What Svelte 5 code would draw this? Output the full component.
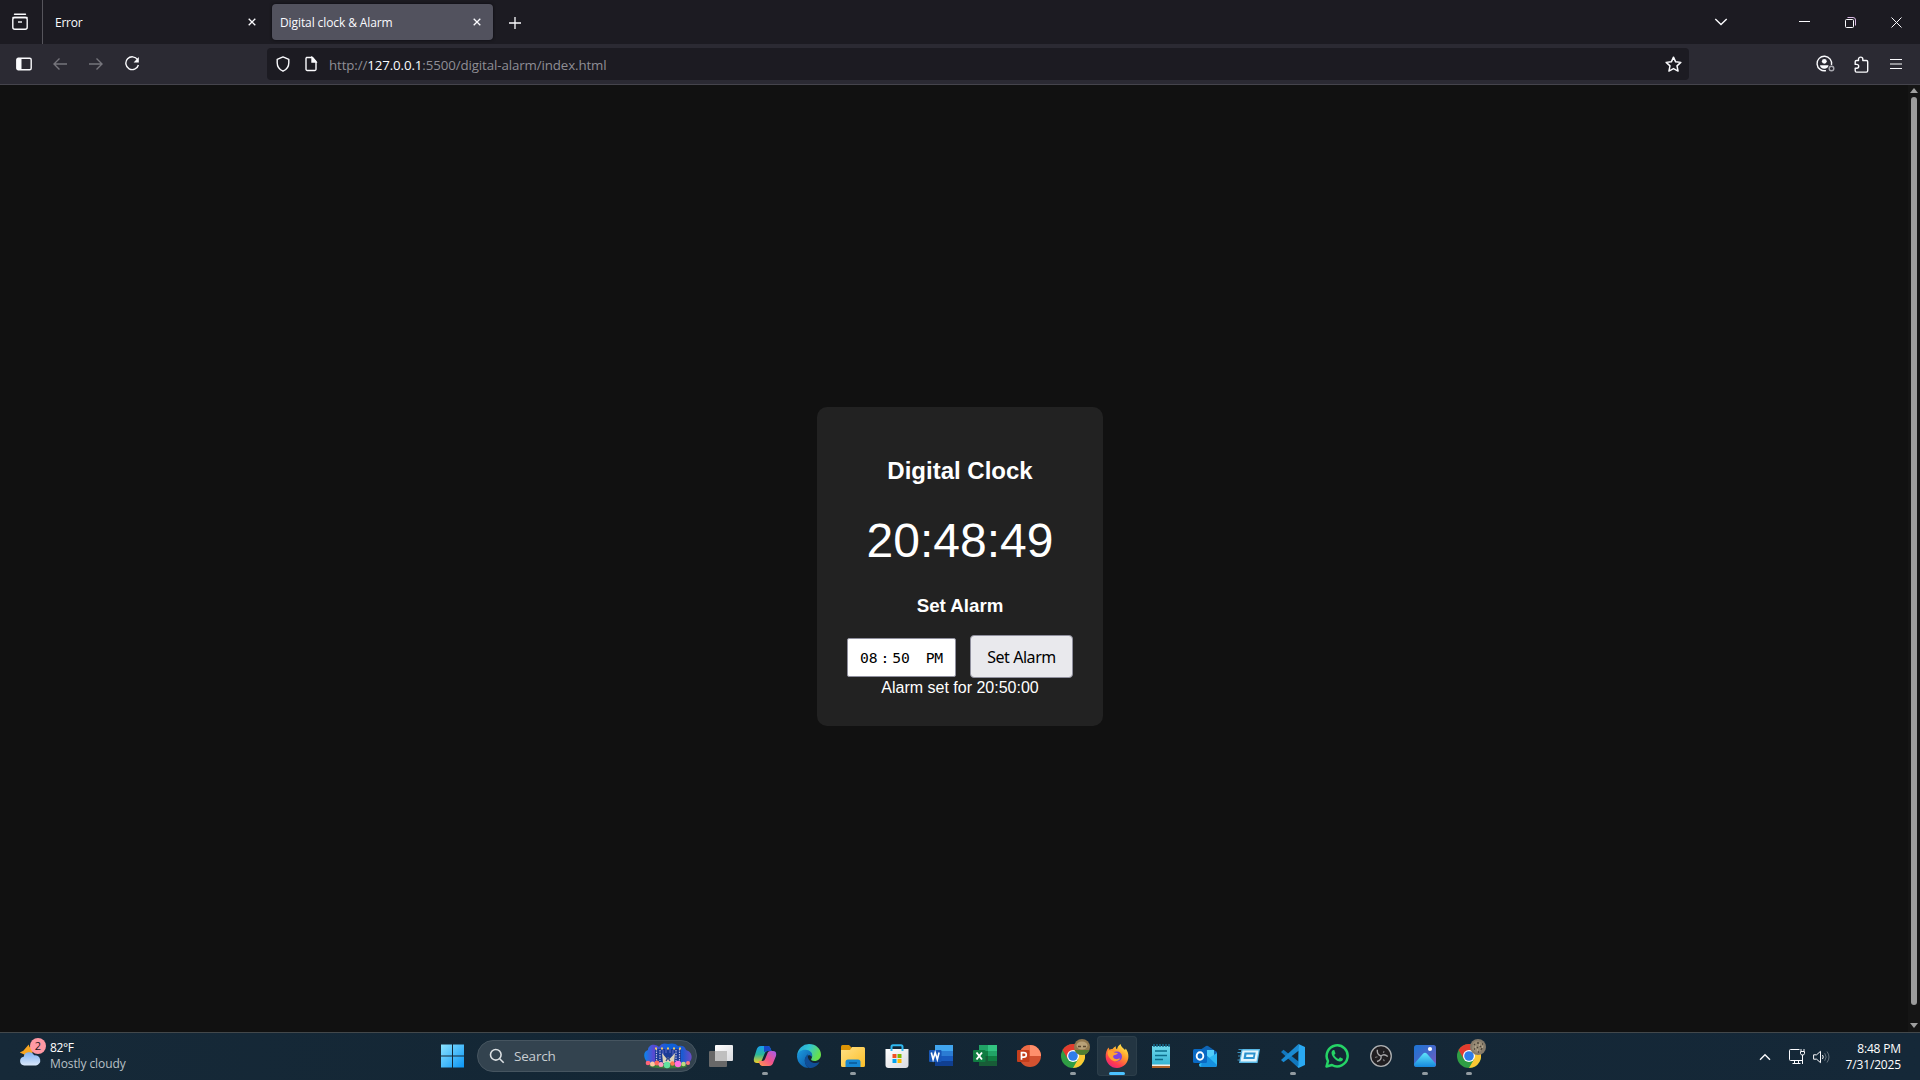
<script>
  const clock = '20:48:49';
  const apps = [
    { id: 'taskview' },
    { id: 'copilot', running: true },
    { id: 'edge' },
    { id: 'explorer', running: true },
    { id: 'store' },
    { id: 'word' },
    { id: 'excel' },
    { id: 'powerpoint' },
    { id: 'chrome', running: true, avatar: 'a' },
    { id: 'firefox', active: true },
    { id: 'notepad' },
    { id: 'outlook' },
    { id: 'run' },
    { id: 'vscode', running: true },
    { id: 'whatsapp' },
    { id: 'obs' },
    { id: 'photos', running: true },
    { id: 'chrome', running: true, avatar: 'b' }
  ];
</script>

<svg width="0" height="0" class="defs" aria-hidden="true">
  <defs>
    <linearGradient id="win" x1="0" y1="0" x2="1" y2="1"><stop offset="0" stop-color="#8be3ff" /><stop offset="1" stop-color="#0a95f5" /></linearGradient>
    <linearGradient id="copA" x1="0" y1="0" x2="0" y2="1"><stop offset="0" stop-color="#189df0" /><stop offset=".5" stop-color="#2bb89a" /><stop offset="1" stop-color="#f5cf25" /></linearGradient>
    <linearGradient id="copB" x1="1" y1="0" x2="0" y2="1"><stop offset="0" stop-color="#a45df0" /><stop offset=".5" stop-color="#f0528c" /><stop offset="1" stop-color="#ff9a4a" /></linearGradient>
    <linearGradient id="edgeA" x1="0" y1="0" x2="1" y2=".4"><stop offset="0" stop-color="#229fdc" /><stop offset=".5" stop-color="#32c4d2" /><stop offset="1" stop-color="#67e04c" /></linearGradient>
    <linearGradient id="edgeB" x1="0" y1="0" x2="1" y2="1"><stop offset="0" stop-color="#1b9de2" /><stop offset="1" stop-color="#0c4e9c" /></linearGradient>
    <linearGradient id="fold" x1="0" y1="0" x2="1" y2="1"><stop offset="0" stop-color="#ffe086" /><stop offset="1" stop-color="#fcbf28" /></linearGradient>
    <linearGradient id="fox" x1=".8" y1="0" x2=".2" y2="1"><stop offset="0" stop-color="#fff14f" /><stop offset=".4" stop-color="#ff9a2a" /><stop offset=".75" stop-color="#ff3d4f" /><stop offset="1" stop-color="#e51f81" /></linearGradient>
    <linearGradient id="pad" x1="0" y1="0" x2="0" y2="1"><stop offset="0" stop-color="#6fd8ec" /><stop offset="1" stop-color="#36b4d4" /></linearGradient>
    <linearGradient id="photo" x1="0" y1="0" x2="1" y2="1"><stop offset="0" stop-color="#1b74d4" /><stop offset=".6" stop-color="#4d66c8" /><stop offset="1" stop-color="#8058bf" /></linearGradient>
    <linearGradient id="hill" x1="0" y1="0" x2="0" y2="1"><stop offset="0" stop-color="#60e5fb" /><stop offset="1" stop-color="#1687dc" /></linearGradient>
    <linearGradient id="cloud" x1="0" y1="0" x2="0" y2="1"><stop offset="0" stop-color="#7fb1f2" /><stop offset="1" stop-color="#dbe8fa" /></linearGradient>
    <linearGradient id="white" x1="0" y1="0" x2="1" y2="1"><stop offset="0" stop-color="#fff" /><stop offset="1" stop-color="#d9dade" /></linearGradient>
    <linearGradient id="balloons" x1="0" y1="0" x2="1" y2="0"><stop offset="0" stop-color="#0a84ec" /><stop offset=".2" stop-color="#5a48d0" /><stop offset=".5" stop-color="#0c62d8" /><stop offset=".8" stop-color="#1a5ad2" /><stop offset="1" stop-color="#6a4cc8" /></linearGradient>
  </defs>
</svg>

<div class="screen">
  <header class="tabs">
    <div class="archive">
      <svg width="18" height="18" viewBox="0 0 18 18" class="line"><path d="M3.5 1.2h11M2 4.5h14" stroke-linecap="round" /><rect x="1.8" y="4.5" width="14.4" height="11.7" rx="2" /><path d="M7 9h4" /></svg>
    </div>
    <div class="tab">
      <span class="label err">Error</span>
      <svg width="8" height="8" viewBox="0 0 8 8" class="line close"><path d="M.7.7l6.6 6.6M7.3.7L.7 7.3" /></svg>
    </div>
    <div class="tab current">
      <span class="label title">Digital clock &amp; Alarm</span>
      <svg width="8" height="8" viewBox="0 0 8 8" class="line close"><path d="M.7.7l6.6 6.6M7.3.7L.7 7.3" /></svg>
    </div>
    <svg width="12" height="12" viewBox="0 0 12 12" class="line plus"><path d="M6 0v12M0 6h12" /></svg>
    <div class="window">
      <svg width="14" height="8" viewBox="0 0 14 8" class="line"><path d="M1.3 1L7 6.6 12.7 1" /></svg>
      <svg width="11" height="11" viewBox="0 0 11 11" class="line thin min"><path d="M0 4.500h11" /></svg>
      <svg width="11" height="11" viewBox="0 0 11 11" class="line thin max"><rect x=".5" y="2.5" width="8" height="8" rx="1" /><path d="M2.5 .5h5.5a2.5 2.5 0 0 1 2.5 2.5v5.5" stroke="#d9b8e4" /></svg>
      <svg width="11" height="11" viewBox="0 0 11 11" class="line thin quit"><path d="M.5.5l10 10M10.5.5l-10 10" /></svg>
    </div>
  </header>

  <nav class="toolbar">
    <div class="navs">
      <svg width="16" height="14" viewBox="0 0 16 14" class="line"><rect x=".8" y="1.3" width="14.4" height="11.4" rx="1.5" /><path d="M1 2h4.500v10H1z" fill="#fbfbfe" stroke="none" /></svg>
      <svg width="16" height="16" viewBox="0 0 16 16" class="line dim"><path d="M15 8H2M7.5 2.5L2 8l5.5 5.5" /></svg>
      <svg width="16" height="16" viewBox="0 0 16 16" class="line dim"><path d="M1 8h13M8.500 2.500L14 8l-5.500 5.500" /></svg>
      <svg width="16" height="16" viewBox="0 0 16 16" class="line"><path d="M13.6 3.700A6.400 6.400 0 1 0 14.400 9" /><path d="M14.800 1v5.400H9.600z" fill="#fbfbfe" stroke="none" /></svg>
    </div>
    <div class="url">
      <svg width="16" height="16" viewBox="0 0 16 16" class="line"><path d="M8 .9L13.800 3.300v3.500C13.800 11 11.300 13.800 8 15.200 4.700 13.800 2.200 11 2.200 6.800V3.300z" stroke-linejoin="round" /></svg>
      <svg width="14" height="16" viewBox="0 0 14 16" class="line page"><path d="M2.500 1.500h6l3.500 4v7.700a1.300 1.300 0 0 1-1.300 1.300H3.300A1.300 1.300 0 0 1 2 13.200V2.500a1 1 0 0 1 .5-1z" /><path d="M8 1.500v4.500h4z" fill="#fbfbfe" /></svg>
      <span class="address">http://<b>127.0.0.1</b>:5500/digital-alarm/index.html</span>
      <svg width="17" height="17" viewBox="0 0 16 16" class="line star"><path d="M8 1.100l2 4.400 4.900.5-3.600 3.300 1 4.900L8 11.800l-4.300 2.400 1-4.900L1.100 6l4.900-.5z" stroke-linejoin="round" /></svg>
    </div>
    <div class="tools">
      <svg width="19" height="18" viewBox="0 0 19 18" class="line"><path d="M15.500 10A7.300 7.300 0 1 0 10 15.600" /><circle cx="8.300" cy="6.300" r="2.400" fill="#fbfbfe" stroke="none" /><path d="M4 10.200h8.500c0 2-2 3.600-4.200 3.600S4 12.200 4 10.200z" fill="#fbfbfe" stroke="none" /><circle cx="15.500" cy="13.500" r="2.300" stroke="#a9a9b0" /></svg>
      <svg width="16" height="17" viewBox="0 0 16 17" class="line"><path d="M5.500 4.500V3.300a2.100 2.100 0 0 1 4.300 0v1.200h3.600a1.300 1.300 0 0 1 1.300 1.300v9a1.300 1.300 0 0 1-1.300 1.300H3.500A1.300 1.300 0 0 1 2.200 14.800v-2.600h1.600a1.900 1.900 0 0 0 0-3.800H2.200V5.800A1.300 1.300 0 0 1 3.500 4.500z" stroke-linejoin="round" /></svg>
      <svg width="12" height="12" viewBox="0 0 12 12" class="line menu"><path d="M0 1.500h12M0 6h12M0 10.500h12" /></svg>
    </div>
  </nav>

  <main class="content">
    <div class="page-area">
      <section class="card">
        <h2>Digital Clock</h2>
        <div class="clock">{clock}</div>
        <h3>Set Alarm</h3>
        <div class="form">
          <div class="time"><span>08</span><i>:</i><span>50</span><span class="pm">PM</span></div>
          <button>Set Alarm</button>
        </div>
        <div class="status">Alarm set for 20:50:00</div>
      </section>
    </div>
    <div class="scroll">
      <svg width="8" height="5" viewBox="0 0 8 5"><path d="M4 0l4 5H0z" /></svg>
      <div class="thumb"></div>
      <svg width="8" height="5" viewBox="0 0 8 5"><path d="M0 0h8L4 5z" /></svg>
    </div>
  </main>

  <footer class="taskbar">
    <div class="weather">
      <div class="wicon">
        <svg width="28" height="28" viewBox="0 0 28 28">
          <path d="M12 4l1 3 4-1-1 8-8 4-1-3-5-2 4-2z" fill="#f7a521" />
          <path d="M7 27.500a5 5 0 0 1-.6-9.900A6.200 6.200 0 0 1 18 16a5.500 5.500 0 0 1 2.200 11.500z" fill="url(#cloud)" />
        </svg>
        <span class="badge">2</span>
      </div>
      <div class="wtext"><span class="deg">82°F</span><span class="cond">Mostly cloudy</span></div>
    </div>

    <div class="center">
      <div class="start">
        <svg width="24" height="24" viewBox="0 0 24 24"><path d="M1 .500h11v11H1zM13 .500h11v11H13zM1 12.500h11v11H1zM13 12.500h11v11H13z" fill="url(#win)" /></svg>
      </div>
      <div class="search">
        <svg width="16" height="16" viewBox="0 0 16 16" class="glass"><circle cx="6.800" cy="6.800" r="5.300" /><path d="M10.700 10.700l4 4" /></svg>
        <span>Search</span>
        <svg width="48" height="26" viewBox="0 0 48 26" class="art">
          <path d="M1 16C-1 11 1 8 4 7c0-4 4-6 7-5 2 0 3 1 4 2 2-4 6-4 9-3 3-1 8-1 10 2 4-1 7 0 8 4 4 1 7 5 5 10l-3 4H4z" fill="url(#balloons)" />
          <path d="M11 6h26v15H11z" fill="#1b3a96" />
          <path d="M12.500 6v14M35.500 6v14M16 7v11M32 7v11" stroke="#b9b6e0" stroke-width="1.200" stroke-dasharray="1.500 1" />
          <path d="M19 7v5M29 7v5M22 6v4M26 6v4" stroke="#5560bd" stroke-width="1.200" />
          <path d="M11 5.500h26" stroke="#f0c860" stroke-width="2" stroke-dasharray="2 4" />
          <path d="M18 10l5 6 1-2 1.500 2L31 10l-1 10H19z" fill="#ddd3b8" /><path d="M22 18l2-3 2 3" fill="none" stroke="#2f4582" stroke-width="1.300" />
          <ellipse cx="24" cy="23" rx="19" ry="2.500" fill="#3a7d3c" />
          <circle cx="4" cy="20" r="2.300" fill="#ff6678" /><circle cx="8.500" cy="21" r="2.500" fill="#ffc9a0" /><circle cx="13" cy="20" r="2.500" fill="#ff6a5c" /><circle cx="17" cy="21.500" r="2.500" fill="#ff9cc0" /><circle cx="23" cy="22" r="3.200" fill="#63e2a0" /><circle cx="28.500" cy="20.500" r="2.300" fill="#ff7a50" /><circle cx="34" cy="21" r="3.200" fill="#ff70e0" /><circle cx="39.500" cy="21" r="2.300" fill="#c0dc80" /><circle cx="44" cy="20" r="2" fill="#ff7a80" />
        </svg>
      </div>

      {#each apps as app}
        <div class="app" class:active={app.active}>
          <svg width="24" height="24" viewBox="0 0 24 24">
            {#if app.id === 'taskview'}
              <rect x="6" y="1" width="18" height="16" rx="1" fill="url(#white)" />
              <rect x="0" y="7" width="18" height="16" rx="1" fill="#686868" /><path d="M6 7h12v10H6z" fill="#bfbfbf" />
            {:else if app.id === 'copilot'}
              <path d="M8 2h7q2 0 2.800 3l.7 2h-4q-2 0-2.600 2L9 16q-1 3-3 3H4q-4 0-3-5L3.500 6Q4.500 2 8 2z" fill="url(#copA)" />
              <path d="M11 2h4q2 0 2.800 3l.7 2h-4L11 8z" fill="#1749c8" />
              <path d="M16 22H9q-2 0-2.800-3L5.500 17h4q2 0 2.600-2L15 8q1-1 3-1h2q4 0 3 5l-2.500 6Q19.500 22 16 22z" fill="url(#copB)" />
            {:else if app.id === 'edge'}
              <path d="M.2 11A12 12 0 0 1 12 0c7 0 12 5 12 10.500 0 4-3 6.500-6.500 6.500-3 0-4-1-3-2.500 2-3-.5-6.500-4-6.500-5 0-8 2-10.300 3z" fill="url(#edgeA)" />
              <path d="M0 12C1 7 6 5 10 6c4 .5 6 4 5 7-3-4-8 0-7 5 .5 3 2 5 4 6A12 12 0 0 1 0 12z" fill="url(#edgeB)" />
              <path d="M11 10c-5 3-4 12 1.500 14 4 0 8-2 10-6-3 1.500-7 1.500-9.500-1-2-2-2.500-4-2-7z" fill="#104e97" />
            {:else if app.id === 'explorer'}
              <path d="M0 2.500Q0 1 1.500 1H8l2.500 2.500V8H0z" fill="#dc9405" />
              <path d="M0 6h9l2-3h11.500Q24 3 24 4.500v17q0 1.500-1.500 1.500h-21Q0 23 0 21.500z" fill="url(#fold)" />
              <path d="M4.500 23v-5q0-2.500 2.500-2.500h10q2.500 0 2.500 2.500v5z" fill="#1687d2" /><path d="M8 19h8" stroke="#0b5795" stroke-width="1.500" />
            {:else if app.id === 'store'}
              <path d="M6.500 6V3Q6.500 1.200 8 1.200h8q1.500 0 1.500 1.800v3" fill="none" stroke="#2fb9f1" stroke-width="2" />
              <path d="M.5 5h23v16q0 3-3 3h-17q-3 0-3-3z" fill="url(#white)" /><path d="M6.500 5v2M17.500 5v2" stroke="#2fb9f1" stroke-width="2" />
              <path d="M7.500 10h4v4h-4z" fill="#f25022" /><path d="M12.500 10h4v4h-4z" fill="#7fba00" /><path d="M7.500 15h4v4h-4z" fill="#00a4ef" /><path d="M12.500 15h4v4h-4z" fill="#ffb900" />
            {:else if app.id === 'word'}
              <path d="M6 1h18v6H6z" fill="#41a5ee" /><path d="M6 7h18v5H6z" fill="#2b7cd3" /><path d="M6 12h18v5H6z" fill="#185abd" /><path d="M6 17h18v5H6z" fill="#103f91" />
              <rect y="6" width="12.500" height="12" rx="1" fill="#1857b6" /><path d="M2.300 8.500l1.800 7 2.100-7 2.100 7 1.800-7" fill="none" stroke="#fff" stroke-width="1.600" />
            {:else if app.id === 'excel'}
              <path d="M6 1h9v6H6z" fill="#21a366" /><path d="M15 1h9v6h-9z" fill="#33c481" /><path d="M6 7h9v5H6z" fill="#107c41" /><path d="M15 7h9v5h-9z" fill="#21a366" /><path d="M6 12h18v10H6z" fill="#185c37" /><path d="M15 12h9v5h-9z" fill="#107c41" />
              <rect y="6" width="12.500" height="12" rx="1" fill="#107c41" /><path d="M3.500 8.500l5.500 7M9 8.500l-5.500 7" fill="none" stroke="#fff" stroke-width="1.900" />
            {:else if app.id === 'powerpoint'}
              <circle cx="13" cy="12" r="11" fill="#d35230" /><path d="M13 1a11 11 0 0 1 11 11H13z" fill="#ff8f6b" /><path d="M2 12a11 11 0 0 1 11-11v11z" fill="#ed6c47" />
              <rect y="6" width="12.500" height="12" rx="1" fill="#c43e1c" /><path d="M4.500 15.800V8.700h2.300q2.500 0 2.500 2.200t-2.700 2.200H4.500" fill="none" stroke="#fff" stroke-width="1.700" />
            {:else if app.id === 'chrome'}
              <circle cx="12" cy="12" r="12" fill="#2f9e44" /><path d="M1.600 6A12 12 0 0 1 22.400 6H12L6.800 15z" fill="#e33b2e" /><path d="M22.400 6A12 12 0 0 1 12 24l5.200-9L12 6z" fill="#fcc934" />
              <circle cx="12" cy="12" r="6" fill="#fff" /><circle cx="12" cy="12" r="4.800" fill="#2f7de9" />
            {:else if app.id === 'firefox'}
              <path d="M.7 13C.5 9 1.500 6 3.500 3.500l1 2.200c1-.7 2-.9 3-.7C9 3 10.500 2.500 11 2.500c-.5 1.500 0 2 1 2.800C12.500 3 13.500 1.500 15.500 0c.5 3 3 4 4.500 6l.8-1.500C22.500 7 23.400 9.500 23.400 12.500 23.400 19 18.300 24 12 24S1 19 .7 13z" fill="url(#fox)" />
              <circle cx="12" cy="12.500" r="5" fill="#7c44df" /><path d="M3 7c3-1 5 0 6 1.500l4 .5c-1 2-3 1.500-4.500 2.500-1 1 0 3 2 3.500 2 .5 3-.5 4.500-.5-1 3-6 4-9 1S2 10 3 7z" fill="#ffa330" />
            {:else if app.id === 'notepad'}
              <path d="M3 2h18v19H3z" fill="url(#pad)" /><path d="M3 21h18v3H3z" fill="#b1642a" /><path d="M3 20.500h18v1.500H3z" fill="#f3eee8" />
              <path d="M5 0v3M8 0v3M11 0v3M14 0v3M17 0v3M20 0v3" stroke="#176c8f" stroke-width="1.500" /><path d="M6 7h12M6 11.500h12M6 15.500h8" stroke="#0d6d8b" stroke-width="1.500" />
            {:else if app.id === 'outlook'}
              <path d="M4 8l9-6q1-.7 2 0l9 6v6H4z" fill="#0f65b5" /><path d="M8 6h13v10H8z" fill="#51cdfa" /><path d="M6 20l18-11v12q0 2-2 2H8q-2 0-2-2z" fill="#2db8f3" /><path d="M10 8l14 13q0 2-2 2H8z" fill="#1690df" />
              <rect y="5" width="14" height="14" rx="1.500" fill="#0969c3" /><ellipse cx="7" cy="12" rx="3.300" ry="3.700" fill="none" stroke="#fff" stroke-width="1.900" />
            {:else if app.id === 'run'}
              <path d="M4.500 5H23l-2.500 14H2z" fill="#58b8e6" /><path d="M5.500 6.500h16L19.500 17.500h-16z" fill="#e2f5fd" /><path d="M7.500 8.500h11.200L17.500 15H6.500z" fill="#2b92cf" /><path d="M9.500 10.500h7l-.4 2.500h-7z" fill="#eafaff" /><path d="M1.500 5.500h4M.5 8.500h4M1 12h3M.5 16h3" stroke="#3c94c2" />
            {:else if app.id === 'vscode'}
              <path d="M17.500 6.500v11L2.500 5.800 0 8l17.500 16 1-6z" fill="#1277bd" /><path d="M0 16L17.500 0l.5 6.500L2.500 18.200z" fill="#1a8ad2" /><path d="M17.500 0L24 3v18l-6.500 3-1-2 1-.5z" fill="#2aa9f2" />
            {:else if app.id === 'whatsapp'}
              <path d="M1.500 22.500L3 17A10.500 10.500 0 1 1 7 21z" fill="none" stroke="#25d366" stroke-width="2.500" stroke-linejoin="round" />
              <path d="M8.500 6c-.7 0-2 1.200-2 2.800 0 4 5 8.700 8.500 8.700 2 0 3-1.200 3-2.700l-3-1.500-1.500 1.700c-2-.8-3.500-2.200-4.300-4L10.500 9.500 9.300 6z" fill="#25d366" />
            {:else if app.id === 'obs'}
              <circle cx="12" cy="12" r="10.300" fill="#1f1d20" stroke="#aeb0b2" stroke-width="1.300" />
              <path d="M8.300 5.800c-.3 3.500 1.200 5.600 3.700 6.200M18.800 12.500c-2.500-2.300-5-2.200-6.800-.5M8 17.500c3.300-.7 4.600-3 4-5.500" fill="none" stroke="#a6a6a8" stroke-width="1.400" />
              <path d="M6 13.500l2.500-.8M15 7l-.6 2M15.500 17l-1.300-1.500" stroke="#77777a" stroke-width="1.200" />
            {:else if app.id === 'photos'}
              <rect x="1" y="1" width="22" height="22" rx="2.500" fill="url(#photo)" /><path d="M1 20L10 9.800q2-2 4 0L23 20q0 3-3 3H4q-3 0-3-3z" fill="url(#hill)" /><circle cx="17" cy="5" r="2.100" fill="#fff" />
            {/if}
          </svg>
          {#if app.avatar}
            <svg class="avatar" width="16" height="16" viewBox="0 0 16 16">
              {#if app.avatar === 'a'}
                <circle cx="8" cy="8" r="8" fill="#92794f" /><path d="M.6 11h14.800A8 8 0 0 1 .6 11z" fill="#527e30" /><ellipse cx="8" cy="6.500" rx="5.500" ry="4" fill="#b8a178" /><path d="M4 7.500h3M9 7.500h3" stroke="#5a482f" stroke-width="1.300" />
              {:else}
                <circle cx="8" cy="8" r="8" fill="#857b6b" /><path d="M3 4l3-2 5 1 3 4-3 5-5 2-4-4z" fill="#998c76" /><path d="M4 6l1-1M7 4h2M10 7l1 1M4 10h1M7 9l1-1M11 11l1-2M8 13h1M12 5h1" stroke="#4c443a" stroke-width="1.300" /><path d="M5 8h1M9 6h1M7 11h1M12 8h1" stroke="#c9bda6" stroke-width="1.200" />
              {/if}
            </svg>
          {/if}
          {#if app.running || app.active}<span class="dot"></span>{/if}
        </div>
      {/each}
    </div>

    <div class="tray">
      <svg width="12" height="8" viewBox="0 0 12 8" class="line up"><path d="M1 6.800l5-5 5 5" /></svg>
      <svg width="17" height="17" viewBox="0 0 17 17" class="line thin net"><path d="M10.500 1.500h-9a1 1 0 0 0-1 1v9a1 1 0 0 0 1 1h12M5.500 12.500v3M9.500 12.500v3M3.500 15.500h8M13.500 7v9M12 1v2M15 1v2M11.500 3.500h4v2l-1 1.500h-2l-1-1.500z" /></svg>
      <svg width="17" height="14" viewBox="0 0 17 14" class="line thin vol"><path d="M.6 4.800h3L7.500 1.300v11.400L3.600 9.200h-3z" stroke-linejoin="round" /><path d="M9.500 5q1.500 2 0 4" /><path d="M11.700 3.200q3 3.800 0 7.600M14 1.500q4 5.500 0 11" opacity=".35" /></svg>
      <div class="when"><span class="hour">8:48 PM</span><span class="date">7/31/2025</span></div>
    </div>
  </footer>
</div>

<style>
  :global(body) { margin: 0; background: #111; overflow: hidden; }
  .defs { position: absolute; }
  svg { display: block; flex: none; }
  .screen { width: 1920px; height: 1080px; display: flex; flex-direction: column; font-family: "Open Sans", "Noto Sans", sans-serif; color: #fbfbfe; box-sizing: border-box; }
  .screen * { box-sizing: border-box; }
  .line { fill: none; stroke: #fbfbfe; stroke-width: 1.4; }
  .thin { stroke-width: 1; }
  .dim { stroke: #76757c; }

  .tabs { height: 44px; background: #1c1b22; display: flex; align-items: center; }
  .archive { width: 43px; height: 44px; border-right: 1px solid #56555c; padding: 13px 0 0 11px; }
  .tab { width: 221px; height: 36px; border-radius: 4px; margin-left: 4px; padding: 0 12px 0 8px; display: flex; align-items: center; justify-content: space-between; font-size: 12px; }
  .tab .close { stroke-width: 1.3; }
  .current { background: #52525e; box-shadow: 0 0 3px #0b0a0f; }
  .label { white-space: nowrap; padding-top: 1px; }
  .err { letter-spacing: -0.25px; }
  .title { letter-spacing: -0.1px; }
  .plus { margin: 1px 0 0 16px; stroke-width: 1.3; }
  .window { margin-left: auto; padding-right: 18px; display: flex; align-items: center; }
  .min { margin-left: 71px; }
  .max { margin-left: 35px; }
  .quit { margin-left: 35px; }

  .toolbar { height: 41px; background: #2b2a33; border-bottom: 1px solid #45444c; display: flex; align-items: center; }
  .navs { width: 267px; padding-left: 16px; display: flex; align-items: center; gap: 20px; }
  .url { width: 1422px; height: 32px; border-radius: 4px; background: #1c1b22; display: flex; align-items: center; padding: 0 7px 0 8px; }
  .page { margin-left: 13px; }
  .address { margin-left: 11px; padding-top: 2px; font-size: 13.3px; letter-spacing: -0.11px; color: #8f8e95; white-space: nowrap; }
  .address b { font-weight: 400; color: #fbfbfe; }
  .star { margin-left: auto; }
  .tools { margin-left: auto; padding-right: 18px; display: flex; align-items: center; gap: 18px; }
  .menu { stroke-width: 1.2; margin-left: 3px; }

  .content { height: 947px; background: #111; display: flex; }
  .page-area { flex: 1; padding-left: 12px; display: flex; align-items: center; justify-content: center; }
  .card { width: 286px; height: 319px; margin-top: 16px; padding: 30px; border-radius: 10px; background: #222; color: #fff; font-family: "Liberation Sans", Arial, sans-serif; text-align: center; }
  h2 { margin: 20px 0 28px; font-size: 24px; line-height: 27px; }
  .clock { font-size: 48px; line-height: 57px; margin-bottom: -2px; white-space: nowrap; }
  h3 { margin: 28px 0 19px; font-size: 18.72px; line-height: 21px; }
  .form { display: flex; align-items: center; justify-content: space-between; height: 43px; }
  .time { width: 109px; height: 39px; margin-top: 1px; background: #fff; border: 1px solid #8f8f9d; border-radius: 2px; color: #000; display: flex; align-items: center; padding-left: 12px; font-family: "DejaVu Sans Mono", monospace; font-size: 14.7px; }
  .time span { letter-spacing: -0.2px; }
  .time i { font-style: normal; width: 15px; text-align: center; }
  .time .pm { margin-left: auto; padding-right: 12px; }
  button { width: 103px; height: 43px; border: 1px solid #8f8f9d; border-radius: 4px; background: #e9e9ed; color: #000; padding: 0; font: 16px "Noto Sans", sans-serif; letter-spacing: -0.45px; }
  .status { font-size: 16px; line-height: 20px; }

  .scroll { width: 12px; display: flex; flex-direction: column; align-items: center; padding: 3px 0 4px; background: #151515; fill: #a0a0a0; }
  .thumb { flex: 1; width: 6px; margin: 4px 0 18px; border-radius: 3px; background: #9b9b9b; }

  .taskbar { height: 48px; border-top: 1px solid #43484b; background: linear-gradient(90deg, #162938, #132634 40%, #152838); display: flex; }
  .weather { width: 430px; padding: 4px 0 0 18px; display: flex; }
  .wicon { position: relative; width: 32px; padding-top: 1px; }
  .wicon svg { width: 25px; height: 25px; margin-top: 3px; }
  .badge { position: absolute; left: 12px; top: 1px; width: 16px; height: 16px; border-radius: 50%; background: #ff99a4; color: #23161b; font-size: 11px; line-height: 16px; text-align: center; }
  .wtext { display: flex; flex-direction: column; font-size: 12px; line-height: 16px; padding-top: 3px; }
  .deg { letter-spacing: -0.4px; color: #fff; }
  .cond { color: #b8c0c6; letter-spacing: -0.1px; }
  .center { display: flex; }
  .start { width: 47px; padding: 11px 0 0 10px; }
  .search { width: 220px; height: 32px; margin: 7px 2px 0 0; border-radius: 16px; background: #33434f; border: 1px solid #465560; display: flex; align-items: center; padding: 0 4px 0 11px; }
  .search span { font-size: 13.5px; color: #c8cdd1; margin-left: 9px; letter-spacing: -0.2px; }
  .glass { fill: none; stroke: #dce0e3; stroke-width: 1.6; }
  .art { margin-left: auto; }
  .app { position: relative; width: 40px; height: 40px; margin: 3px 2px 0; padding: 8px; border-radius: 4px; }
  .active { background: #233542; box-shadow: inset 0 0 0 1px #2c3e4a; }
  .avatar { position: absolute; left: 21px; top: 3px; }
  .dot { position: absolute; left: 17px; bottom: 1px; width: 6px; height: 3px; border-radius: 2px; background: #929ba1; }
  .active .dot { left: 12px; width: 16px; background: #4cc2ff; }
  .tray { margin-left: auto; padding-right: 19px; display: flex; align-items: center; }
  .net { margin-left: 18px; }
  .vol { margin-left: 7px; }
  .when { margin-left: 16px; display: flex; flex-direction: column; align-items: flex-end; font-size: 12px; line-height: 16px; color: #fff; }
  .hour { letter-spacing: -0.15px; }
  .date { letter-spacing: -0.15px; }
</style>
